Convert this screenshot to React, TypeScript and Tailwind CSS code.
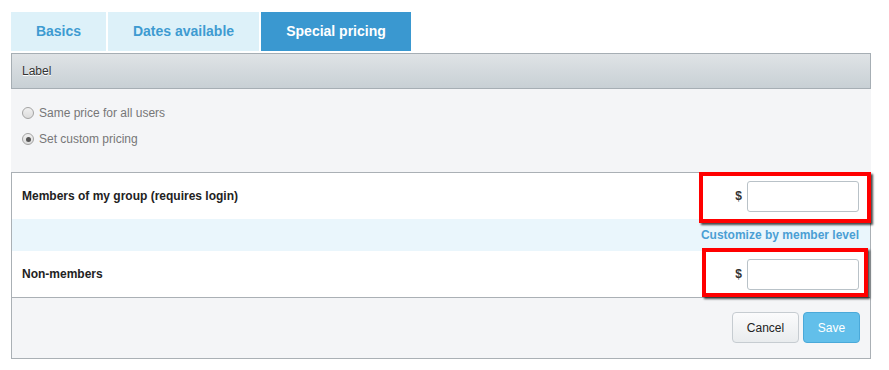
import React from "react";

function Radio({ checked }: { checked?: boolean }) {
  return (
    <span className="relative inline-flex h-[12px] w-[12px] items-center justify-center rounded-full border border-[#a3a3a3] bg-gradient-to-b from-[#f0f0f0] to-[#dcdcdc]">
      {checked && <span className="h-[5px] w-[5px] rounded-full bg-[#555]" />}
    </span>
  );
}

export default function App() {
  return (
    <div className="relative h-[370px] w-[889px] bg-white font-['Liberation_Sans',Arial,sans-serif]">
      <div className="pl-[11px] pt-[12px] w-[871px]">
        {/* Tabs */}
        <div className="flex gap-[2px]">
          <div className="flex h-[39px] w-[95px] items-center justify-center bg-[#ddf1f9] text-[14px] font-bold text-[#3e9bd1]">
            Basics
          </div>
          <div className="flex h-[39px] w-[151px] items-center justify-center bg-[#ddf1f9] text-[14px] font-bold text-[#3e9bd1]">
            Dates available
          </div>
          <div className="flex h-[39px] w-[150px] items-center justify-center bg-[#3a98d0] text-[14px] font-bold text-white">
            Special pricing
          </div>
        </div>

        {/* Header */}
        <div className="mt-[2px] flex h-[36px] items-center border border-[#a6aeb4] bg-gradient-to-b from-[#dfe3e6] to-[#c8d0d5] pl-[10px] text-[12px] text-[#333] [text-shadow:0_1px_0_#fff]">
          Label
        </div>

        {/* Radio section */}
        <div className="flex h-[83px] flex-col bg-[#f4f5f7] pl-[11px] pt-[17px] text-[12px] text-[#777]">
          <label className="flex h-[14px] items-center gap-[5px]">
            <Radio />
            <span>Same price for all users</span>
          </label>
          <label className="mt-[12px] flex h-[14px] items-center gap-[5px]">
            <Radio checked />
            <span>Set custom pricing</span>
          </label>
        </div>

        {/* Pricing rows */}
        <div className="border border-[#aab0b5]">
          <div className="flex h-[46px] items-center justify-between bg-white pl-[10px] pr-[11px]">
            <span className="text-[12px] font-bold text-[#222]">Members of my group (requires login)</span>
            <div className="flex items-center gap-[5px]">
              <span className="text-[12px] font-bold text-[#333]">$</span>
              <input className="h-[31px] w-[112px] rounded-[3px] border border-[#b9c2c8] bg-white outline-none" />
            </div>
          </div>
          <div className="flex h-[32px] items-center justify-end bg-[#eaf6fc] pr-[11px]">
            <span className="text-[12px] font-bold text-[#4a9fd4]">Customize by member level</span>
          </div>
          <div className="flex h-[46px] items-center justify-between bg-white pl-[10px] pr-[11px]">
            <span className="text-[12px] font-bold text-[#222]">Non-members</span>
            <div className="flex items-center gap-[5px]">
              <span className="text-[12px] font-bold text-[#333]">$</span>
              <input className="h-[31px] w-[112px] rounded-[3px] border border-[#b9c2c8] bg-white outline-none" />
            </div>
          </div>
          <div className="flex h-[61px] items-start justify-end gap-[4px] border-t border-[#aab0b5] bg-[#f4f5f7] pr-[10px] pt-[14px]">
            <button className="h-[31px] w-[67px] rounded-[4px] border border-[#c6ccd1] bg-gradient-to-b from-[#fbfbfc] to-[#e9ecee] text-[12px] text-[#222]">
              Cancel
            </button>
            <button className="h-[31px] w-[57px] rounded-[4px] border border-[#4aa9d9] bg-[#62bfea] text-[12px] text-white">
              Save
            </button>
          </div>
        </div>
      </div>

      {/* Annotation boxes */}
      <div className="pointer-events-none absolute left-[699px] top-[172px] h-[51px] w-[172px] border-[4px] border-[#ff0000] shadow-[2px_2px_2px_rgba(0,0,0,0.7)]" />
      <div className="pointer-events-none absolute left-[702px] top-[248px] h-[49px] w-[166px] border-[4px] border-[#ff0000] shadow-[2px_2px_2px_rgba(0,0,0,0.7)]" />
    </div>
  );
}
